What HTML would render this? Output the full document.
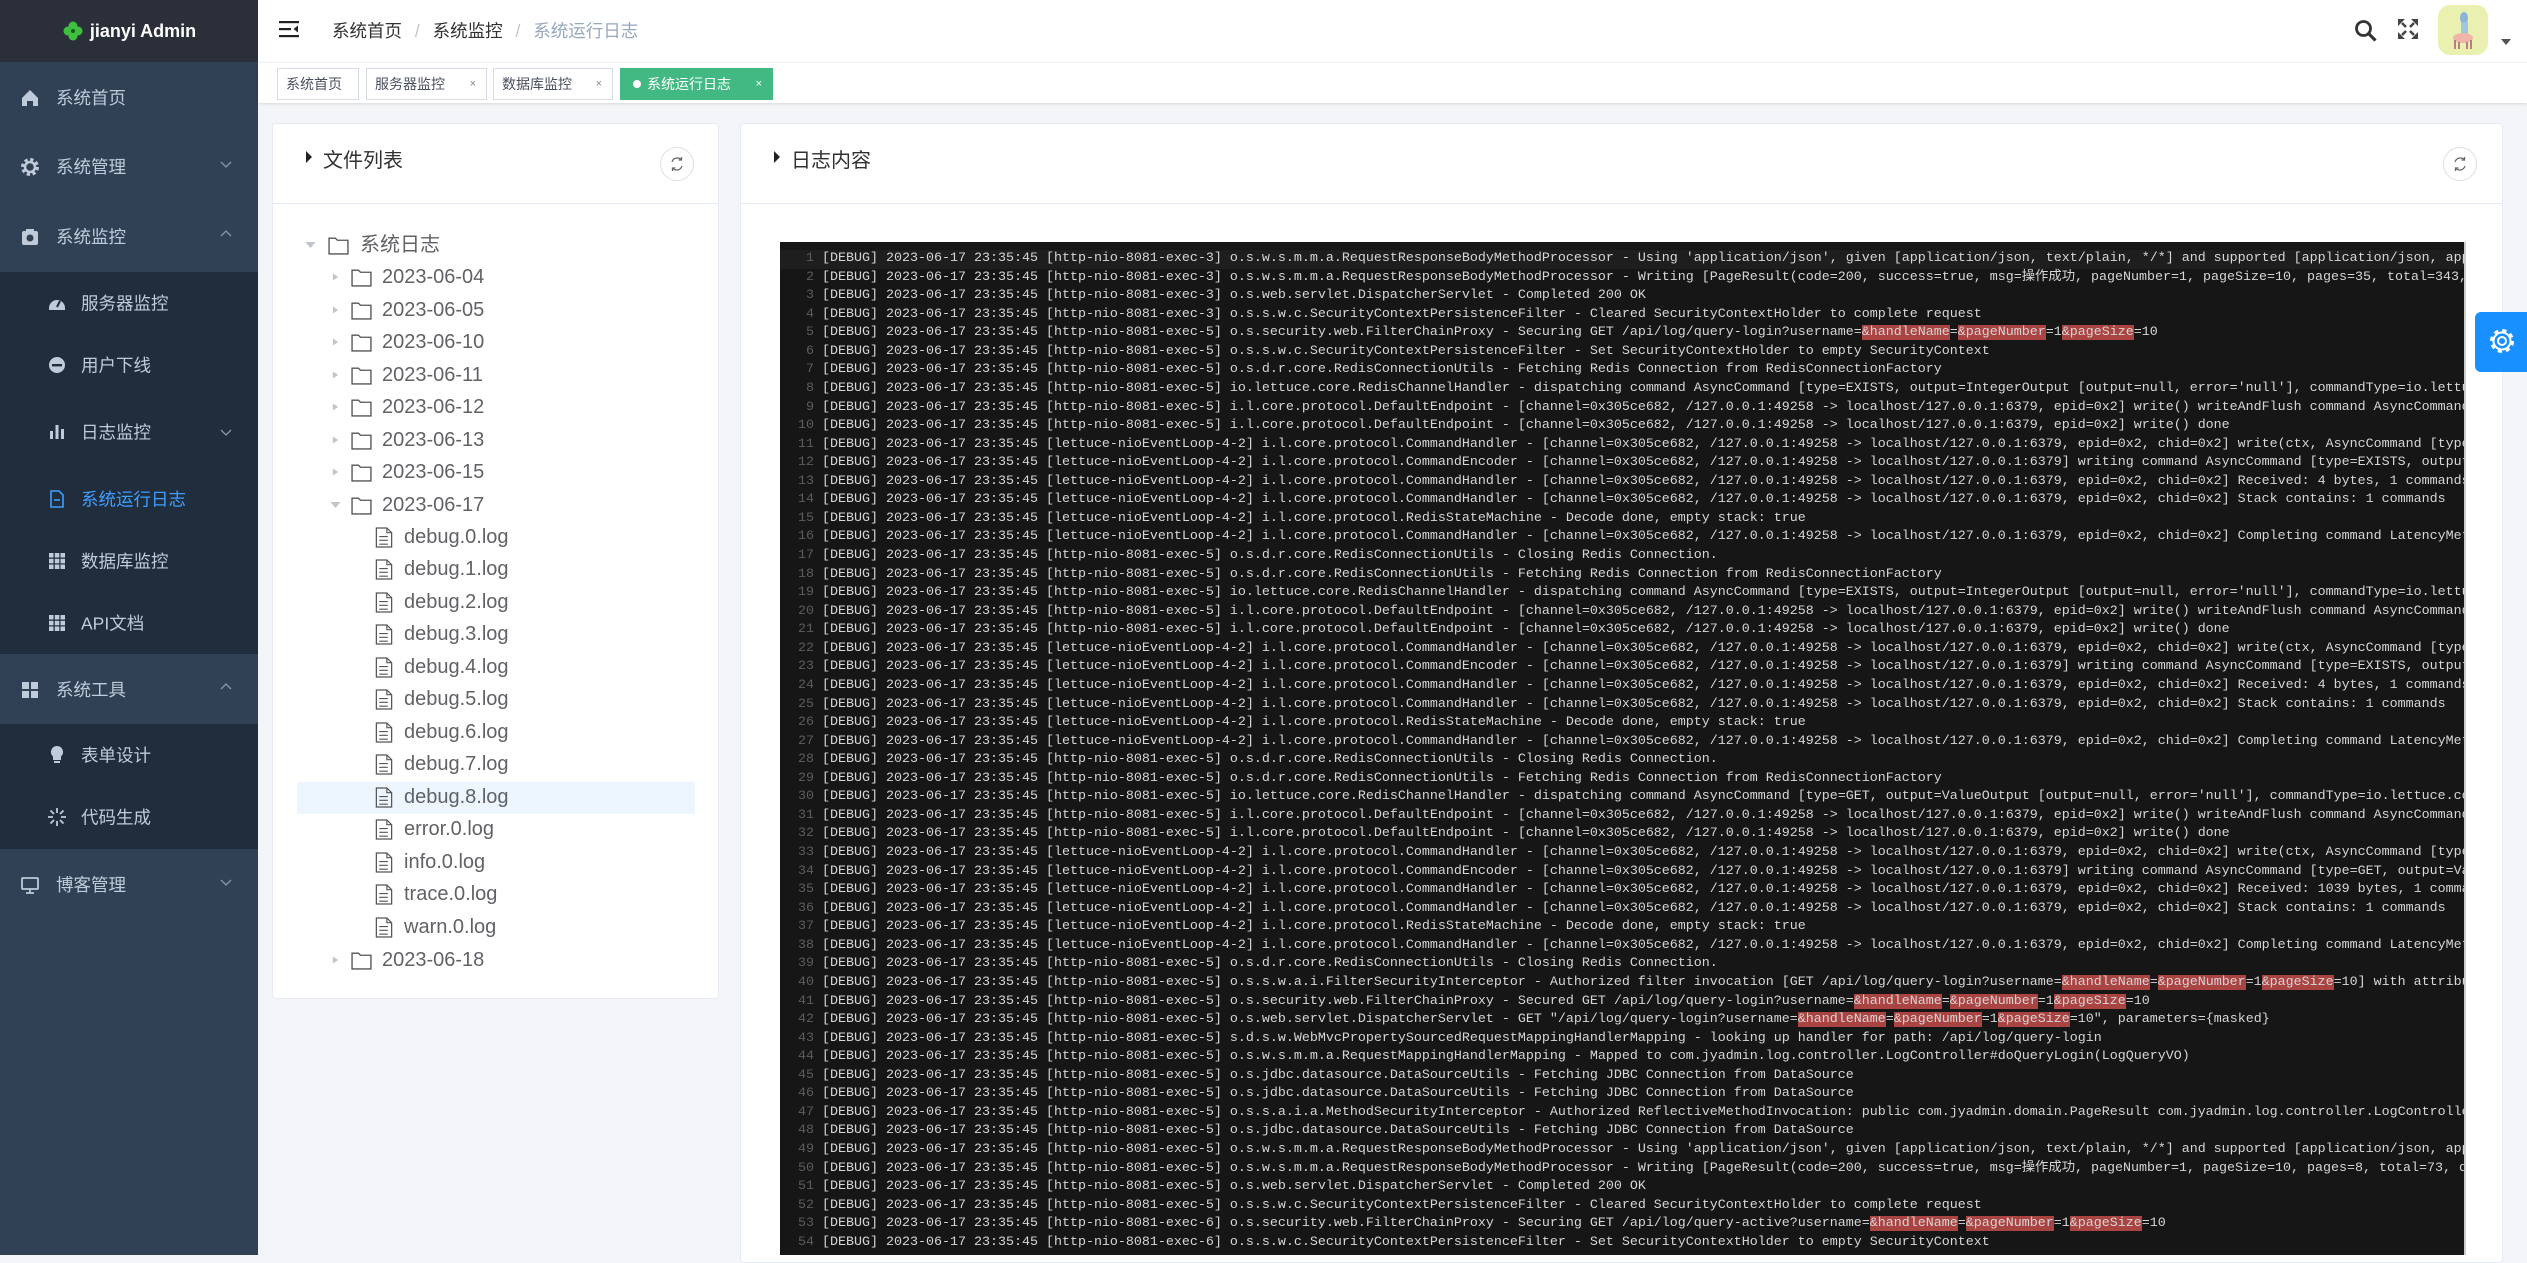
<!DOCTYPE html>
<html><head><meta charset="utf-8"><style>
*{margin:0;padding:0;box-sizing:border-box}
body{width:2527px;height:1255px;overflow:hidden;background:#f3f5f8;font-family:"Liberation Sans","Noto Sans CJK SC",sans-serif;position:relative}
.abs{position:absolute}
#side{left:0;top:0;width:258px;height:1255px;background:#304156}
#logo{left:0;top:0;width:258px;height:62px;background:#2b2f3a;color:#fff;font-weight:bold;font-size:18px;display:flex;align-items:center;justify-content:center;gap:6px}
.mi{position:absolute;left:0;width:258px;height:70px;display:flex;align-items:center;color:#bfcbd9;font-size:17.5px}
.mi .ic{position:absolute;left:20px;top:26px;width:20px;height:20px}
.mi .tx{position:absolute;left:56px}
.mi .ar{position:absolute;left:220px;top:27px;width:12px;height:12px}
.sub{position:absolute;left:0;width:258px;background:#1f2d3d}
.si{position:absolute;left:0;width:258px;height:62px;color:#bfcbd9;font-size:17.5px}
.si .ic{position:absolute;left:47px;top:21px;width:20px;height:20px}
.si .tx{position:absolute;left:81px;top:50%;transform:translateY(-50%)}
#hdr{left:258px;top:0;width:2269px;height:62px;background:#fff}
#tags{left:258px;top:62px;width:2269px;height:41px;background:#fff;border-top:1px solid #eef0f3;box-shadow:0 1px 3px rgba(0,0,0,.12)}
.tag{position:absolute;top:5px;height:32px;border:1px solid #d8dce5;background:#fff;color:#495060;font-size:14px;line-height:30px;padding-left:8px}
.tag .x{position:absolute;right:10px;font-size:11px;color:#888}
.card{background:#fff;border:1px solid #e6ebf5;border-radius:4px}
.ch{position:absolute;left:0;right:0;top:0;height:80px;border-bottom:1px solid #e6ebf5}
.rb{position:absolute;width:34px;height:34px;border:1px solid #dcdfe6;border-radius:50%;background:#fff}
.tr{position:absolute;font-size:20px;color:#606266;height:32px;line-height:32px;white-space:nowrap}
#log{left:780px;top:242px;width:1684px;height:1013px;background:#161616;overflow:hidden;font-family:"Liberation Mono","Noto Sans CJK SC",monospace;font-size:13.33px;color:#d6d6d6;padding-top:8px}
.ln{height:18.57px;line-height:18.57px;white-space:pre;position:relative;padding-left:42px}
.ln i{font-style:normal;position:absolute;left:0;width:34px;text-align:right;color:#5c5c5c}
.ln:first-child{background:#1e1e1e}
.r{background:#a94442;font-weight:normal}
</style></head><body>
<div id="side" class="abs"></div>
<div id="logo" class="abs"><svg width="22" height="22" viewBox="0 0 22 22"><g fill="#3fbf3f"><circle cx="11" cy="6" r="4.5"/><circle cx="6" cy="11" r="4.5"/><circle cx="16" cy="11" r="4.5"/><circle cx="11" cy="16" r="4.5"/></g><circle cx="11" cy="11" r="2" fill="#1a5a1a"/></svg><span>jianyi Admin</span></div>

<div class="mi" style="top:62px"><svg class="ic" viewBox="0 0 20 20"><path d="M10 2L2 10v8h5v-5h6v5h5v-8z" fill="#bfcbd9"/></svg><span class="tx">系统首页</span></div>
<div class="mi" style="top:131px"><svg class="ic" viewBox="0 0 20 20"><circle cx="10" cy="10" r="7" fill="none" stroke="#bfcbd9" stroke-width="4" stroke-dasharray="3 2.5"/><circle cx="10" cy="10" r="5" fill="none" stroke="#bfcbd9" stroke-width="2.5"/></svg><span class="tx">系统管理</span><svg class="ar" viewBox="0 0 12 12"><path d="M1 4l5 5 5-5" fill="none" stroke="#8a97a8" stroke-width="1.3"/></svg></div>
<div class="mi" style="top:201px"><svg class="ic" viewBox="0 0 20 20"><rect x="2" y="4" width="16" height="14" rx="2" fill="#bfcbd9"/><rect x="6" y="2" width="8" height="3" fill="#bfcbd9"/><circle cx="10" cy="11" r="3.5" fill="#304156"/></svg><span class="tx">系统监控</span><svg class="ar" viewBox="0 0 12 12"><path d="M1 8l5-5 5 5" fill="none" stroke="#8a97a8" stroke-width="1.3"/></svg></div>

<div class="sub" style="top:272px;height:382px">
 <div class="si" style="top:0"><svg class="ic" viewBox="0 0 20 20"><path d="M2 15a8 8 0 0116 0v2H2z" fill="#bfcbd9"/><path d="M10 14l3-6" stroke="#1f2d3d" stroke-width="2"/></svg><span class="tx">服务器监控</span></div>
 <div class="si" style="top:62px"><svg class="ic" viewBox="0 0 20 20"><circle cx="10" cy="10" r="8" fill="#bfcbd9"/><rect x="5" y="9" width="10" height="2.4" fill="#1f2d3d"/></svg><span class="tx">用户下线</span></div>
 <div class="si" style="top:129px"><svg class="ic" viewBox="0 0 20 20"><g fill="#bfcbd9"><rect x="3" y="9" width="3" height="8"/><rect x="8.5" y="3" width="3" height="14"/><rect x="14" y="7" width="3" height="10"/></g></svg><span class="tx">日志监控</span><svg class="ar" style="position:absolute;left:220px;top:25px;width:12px;height:12px" viewBox="0 0 12 12"><path d="M1 4l5 5 5-5" fill="none" stroke="#8a97a8" stroke-width="1.3"/></svg></div>
 <div class="si" style="top:196px;color:#409eff"><svg class="ic" viewBox="0 0 20 20"><path d="M4 2h8l4 4v12H4z" fill="none" stroke="#409eff" stroke-width="1.6"/><path d="M7 11h6" stroke="#409eff" stroke-width="1.6"/></svg><span class="tx">系统运行日志</span></div>
 <div class="si" style="top:258px"><svg class="ic" viewBox="0 0 20 20"><g fill="#bfcbd9"><rect x="2" y="2" width="4.5" height="4.5"/><rect x="7.8" y="2" width="4.5" height="4.5"/><rect x="13.5" y="2" width="4.5" height="4.5"/><rect x="2" y="7.8" width="4.5" height="4.5"/><rect x="7.8" y="7.8" width="4.5" height="4.5"/><rect x="13.5" y="7.8" width="4.5" height="4.5"/><rect x="2" y="13.5" width="4.5" height="4.5"/><rect x="7.8" y="13.5" width="4.5" height="4.5"/><rect x="13.5" y="13.5" width="4.5" height="4.5"/></g></svg><span class="tx">数据库监控</span></div>
 <div class="si" style="top:320px"><svg class="ic" viewBox="0 0 20 20"><g fill="#bfcbd9"><rect x="2" y="2" width="4.5" height="4.5"/><rect x="7.8" y="2" width="4.5" height="4.5"/><rect x="13.5" y="2" width="4.5" height="4.5"/><rect x="2" y="7.8" width="4.5" height="4.5"/><rect x="7.8" y="7.8" width="4.5" height="4.5"/><rect x="13.5" y="7.8" width="4.5" height="4.5"/><rect x="2" y="13.5" width="4.5" height="4.5"/><rect x="7.8" y="13.5" width="4.5" height="4.5"/><rect x="13.5" y="13.5" width="4.5" height="4.5"/></g></svg><span class="tx">API文档</span></div>
</div>
<div class="mi" style="top:654px"><svg class="ic" viewBox="0 0 20 20"><g fill="#bfcbd9"><rect x="2" y="2" width="7" height="7"/><rect x="11" y="2" width="7" height="7"/><rect x="2" y="11" width="7" height="7"/><rect x="11" y="11" width="7" height="7"/></g></svg><span class="tx">系统工具</span><svg class="ar" viewBox="0 0 12 12"><path d="M1 8l5-5 5 5" fill="none" stroke="#8a97a8" stroke-width="1.3"/></svg></div>
<div class="sub" style="top:724px;height:125px">
 <div class="si" style="top:0"><svg class="ic" viewBox="0 0 20 20"><path d="M10 1a6 6 0 00-4 10.5V15h8v-3.5A6 6 0 0010 1z" fill="#bfcbd9"/><rect x="7" y="16" width="6" height="2" fill="#bfcbd9"/></svg><span class="tx">表单设计</span></div>
 <div class="si" style="top:62px"><svg class="ic" viewBox="0 0 20 20"><g stroke="#bfcbd9" stroke-width="1.8"><path d="M10 1v5M10 14v5M1 10h5M14 10h5M3.5 3.5l3.5 3.5M13 13l3.5 3.5M16.5 3.5L13 7M7 13l-3.5 3.5"/></g></svg><span class="tx">代码生成</span></div>
</div>
<div class="mi" style="top:849px"><svg class="ic" viewBox="0 0 20 20"><rect x="2" y="3" width="16" height="11" rx="1" fill="none" stroke="#bfcbd9" stroke-width="1.8"/><path d="M10 14v3M6 18h8" stroke="#bfcbd9" stroke-width="1.8"/></svg><span class="tx">博客管理</span><svg class="ar" viewBox="0 0 12 12"><path d="M1 4l5 5 5-5" fill="none" stroke="#8a97a8" stroke-width="1.3"/></svg></div>

<div id="hdr" class="abs">
 <svg class="abs" style="left:21px;top:19px" width="20" height="20" viewBox="0 0 20 20"><g fill="#222"><rect x="0" y="2" width="20" height="2.2"/><rect x="0" y="9" width="12" height="2.2"/><rect x="0" y="16" width="20" height="2.2"/><path d="M19 6.5v7l-4.5-3.5z"/></g></svg>
 <div class="abs" style="left:74px;top:18px;font-size:17.5px;color:#303133;white-space:nowrap">系统首页 <span style="color:#c0c4cc;margin:0 8px">/</span> 系统监控 <span style="color:#c0c4cc;margin:0 8px">/</span> <span style="color:#97a8be">系统运行日志</span></div>
 <svg class="abs" style="left:2096px;top:19px" width="24" height="24" viewBox="0 0 24 24"><circle cx="9.5" cy="9.5" r="7" fill="none" stroke="#333" stroke-width="2.8"/><path d="M14.5 14.5l7 7" stroke="#333" stroke-width="3.2"/></svg>
 <svg class="abs" style="left:2139px;top:18px" width="22" height="22" viewBox="0 0 22 22"><g fill="#444"><path d="M1 1h7L1 8zM21 1h-7l7 7zM1 21h7l-7-7zM21 21h-7l7-7z"/><path d="M5 5l4 4M17 5l-4 4M5 17l4-4M17 17l-4-4" stroke="#444" stroke-width="2.5"/></g></svg>
 <div class="abs" style="left:2180px;top:5px;width:50px;height:50px;border-radius:12px;background:#eaf1b0;overflow:hidden"><svg width="50" height="50" viewBox="0 0 50 50"><ellipse cx="26" cy="13" rx="4" ry="6" fill="#8ab4d8"/><rect x="23" y="17" width="7" height="12" fill="#9fc5df"/><ellipse cx="25" cy="33" rx="10" ry="5" fill="#f0b5a8"/><path d="M17 35v9M33 35v9M21 37v7M29 37v7" stroke="#a57" stroke-width="1.5"/></svg></div>
 <svg class="abs" style="left:2243px;top:39px" width="10" height="7" viewBox="0 0 10 7"><path d="M0 0h10L5 6z" fill="#555"/></svg>
</div>
<div id="tags" class="abs">
 <div class="tag" style="left:19px;width:82px">系统首页</div>
 <div class="tag" style="left:108px;width:121px">服务器监控<span class="x">×</span></div>
 <div class="tag" style="left:235px;width:120px">数据库监控<span class="x">×</span></div>
 <div class="tag" style="left:362px;width:153px;background:#42b983;border-color:#42b983;color:#fff;padding-left:12px"><span style="display:inline-block;width:8px;height:8px;border-radius:50%;background:#fff;margin-right:6px;vertical-align:1px"></span>系统运行日志<span class="x" style="color:#fff">×</span></div>
</div>

<div class="card abs" style="left:272px;top:123px;width:447px;height:876px">
 <div class="ch"><svg class="abs" style="left:32px;top:26px" width="8" height="14" viewBox="0 0 8 14"><path d="M1 1l6 6-6 6z" fill="#222"/></svg><span class="abs" style="left:50px;top:20px;font-size:20px;color:#303133">文件列表</span><div class="rb" style="left:387px;top:23px"><svg width="32" height="32" viewBox="0 0 32 32"><path d="M11 14a5.5 5.5 0 019.5-2M21 18a5.5 5.5 0 01-9.5 2" fill="none" stroke="#666" stroke-width="1.3"/><path d="M20.5 9v3h-3M11.5 23v-3h3" fill="none" stroke="#666" stroke-width="1.3"/></svg></div></div>
</div>
<div class="card abs" style="left:740px;top:123px;width:1763px;height:1140px">
 <div class="ch"><svg class="abs" style="left:32px;top:26px" width="8" height="14" viewBox="0 0 8 14"><path d="M1 1l6 6-6 6z" fill="#222"/></svg><span class="abs" style="left:50px;top:20px;font-size:20px;color:#303133">日志内容</span><div class="rb" style="left:1702px;top:23px"><svg width="32" height="32" viewBox="0 0 32 32"><path d="M11 14a5.5 5.5 0 019.5-2M21 18a5.5 5.5 0 01-9.5 2" fill="none" stroke="#666" stroke-width="1.3"/><path d="M20.5 9v3h-3M11.5 23v-3h3" fill="none" stroke="#666" stroke-width="1.3"/></svg></div></div>
</div>

<!-- tree -->
<div class="abs" style="left:297px;top:782px;width:398px;height:32px;background:#edf5fe"></div>
<svg width="0" height="0" style="position:absolute"><defs>
<symbol id="fo" viewBox="0 0 20 18"><path d="M1 2h6l2 2h10v13H1z" fill="none" stroke="#555" stroke-width="1.3"/></symbol>
<symbol id="fi" viewBox="0 0 18 22"><path d="M1 1h11l5 5v15H1z" fill="none" stroke="#555" stroke-width="1.3"/><path d="M12 1v5h5M4 10h9M4 14h9M4 18h9" fill="none" stroke="#555" stroke-width="1.2"/></symbol>
<symbol id="cr" viewBox="0 0 8 10"><path d="M1 1l6 4-6 4z" fill="#c0c4cc"/></symbol>
<symbol id="cd" viewBox="0 0 10 8"><path d="M0 1h10L5 7z" fill="#c0c4cc"/></symbol>
</defs></svg>
<svg class="abs" style="left:305px;top:241px" width="11" height="8"><use href="#cd"/></svg>
<svg class="abs" style="left:328px;top:236px" width="21" height="19"><use href="#fo"/></svg>
<div class="tr" style="left:360px;top:229px">系统日志</div>
<!-- dates -->
<svg class="abs" style="left:332px;top:272px" width="7" height="10"><use href="#cr"/></svg><svg class="abs" style="left:351px;top:268px" width="21" height="19"><use href="#fo"/></svg><div class="tr" style="left:382px;top:261px">2023-06-04</div>
<svg class="abs" style="left:332px;top:305px" width="7" height="10"><use href="#cr"/></svg><svg class="abs" style="left:351px;top:301px" width="21" height="19"><use href="#fo"/></svg><div class="tr" style="left:382px;top:294px">2023-06-05</div>
<svg class="abs" style="left:332px;top:337px" width="7" height="10"><use href="#cr"/></svg><svg class="abs" style="left:351px;top:333px" width="21" height="19"><use href="#fo"/></svg><div class="tr" style="left:382px;top:326px">2023-06-10</div>
<svg class="abs" style="left:332px;top:370px" width="7" height="10"><use href="#cr"/></svg><svg class="abs" style="left:351px;top:366px" width="21" height="19"><use href="#fo"/></svg><div class="tr" style="left:382px;top:359px">2023-06-11</div>
<svg class="abs" style="left:332px;top:402px" width="7" height="10"><use href="#cr"/></svg><svg class="abs" style="left:351px;top:398px" width="21" height="19"><use href="#fo"/></svg><div class="tr" style="left:382px;top:391px">2023-06-12</div>
<svg class="abs" style="left:332px;top:435px" width="7" height="10"><use href="#cr"/></svg><svg class="abs" style="left:351px;top:431px" width="21" height="19"><use href="#fo"/></svg><div class="tr" style="left:382px;top:424px">2023-06-13</div>
<svg class="abs" style="left:332px;top:467px" width="7" height="10"><use href="#cr"/></svg><svg class="abs" style="left:351px;top:463px" width="21" height="19"><use href="#fo"/></svg><div class="tr" style="left:382px;top:456px">2023-06-15</div>
<svg class="abs" style="left:330px;top:501px" width="11" height="8"><use href="#cd"/></svg><svg class="abs" style="left:351px;top:496px" width="21" height="19"><use href="#fo"/></svg><div class="tr" style="left:382px;top:489px">2023-06-17</div>
<!-- files -->
<svg class="abs" style="left:375px;top:527px" width="18" height="21"><use href="#fi"/></svg><div class="tr" style="left:404px;top:521px">debug.0.log</div>
<svg class="abs" style="left:375px;top:559px" width="18" height="21"><use href="#fi"/></svg><div class="tr" style="left:404px;top:553px">debug.1.log</div>
<svg class="abs" style="left:375px;top:592px" width="18" height="21"><use href="#fi"/></svg><div class="tr" style="left:404px;top:586px">debug.2.log</div>
<svg class="abs" style="left:375px;top:624px" width="18" height="21"><use href="#fi"/></svg><div class="tr" style="left:404px;top:618px">debug.3.log</div>
<svg class="abs" style="left:375px;top:657px" width="18" height="21"><use href="#fi"/></svg><div class="tr" style="left:404px;top:651px">debug.4.log</div>
<svg class="abs" style="left:375px;top:689px" width="18" height="21"><use href="#fi"/></svg><div class="tr" style="left:404px;top:683px">debug.5.log</div>
<svg class="abs" style="left:375px;top:722px" width="18" height="21"><use href="#fi"/></svg><div class="tr" style="left:404px;top:716px">debug.6.log</div>
<svg class="abs" style="left:375px;top:754px" width="18" height="21"><use href="#fi"/></svg><div class="tr" style="left:404px;top:748px">debug.7.log</div>
<svg class="abs" style="left:375px;top:787px" width="18" height="21"><use href="#fi"/></svg><div class="tr" style="left:404px;top:781px">debug.8.log</div>
<svg class="abs" style="left:375px;top:819px" width="18" height="21"><use href="#fi"/></svg><div class="tr" style="left:404px;top:813px">error.0.log</div>
<svg class="abs" style="left:375px;top:852px" width="18" height="21"><use href="#fi"/></svg><div class="tr" style="left:404px;top:846px">info.0.log</div>
<svg class="abs" style="left:375px;top:884px" width="18" height="21"><use href="#fi"/></svg><div class="tr" style="left:404px;top:878px">trace.0.log</div>
<svg class="abs" style="left:375px;top:917px" width="18" height="21"><use href="#fi"/></svg><div class="tr" style="left:404px;top:911px">warn.0.log</div>
<svg class="abs" style="left:332px;top:955px" width="7" height="10"><use href="#cr"/></svg><svg class="abs" style="left:351px;top:951px" width="21" height="19"><use href="#fo"/></svg><div class="tr" style="left:382px;top:944px">2023-06-18</div>

<div id="log" class="abs">
<div class="ln"><i>1</i>[DEBUG] 2023-06-17 23:35:45 [http-nio-8081-exec-3] o.s.w.s.m.m.a.RequestResponseBodyMethodProcessor - Using 'application/json', given [application/json, text/plain, */*] and supported [application/json, application/*+json]</div>
<div class="ln"><i>2</i>[DEBUG] 2023-06-17 23:35:45 [http-nio-8081-exec-3] o.s.w.s.m.m.a.RequestResponseBodyMethodProcessor - Writing [PageResult(code=200, success=true, msg=操作成功, pageNumber=1, pageSize=10, pages=35, total=343, data=[</div>
<div class="ln"><i>3</i>[DEBUG] 2023-06-17 23:35:45 [http-nio-8081-exec-3] o.s.web.servlet.DispatcherServlet - Completed 200 OK</div>
<div class="ln"><i>4</i>[DEBUG] 2023-06-17 23:35:45 [http-nio-8081-exec-3] o.s.s.w.c.SecurityContextPersistenceFilter - Cleared SecurityContextHolder to complete request</div>
<div class="ln"><i>5</i>[DEBUG] 2023-06-17 23:35:45 [http-nio-8081-exec-5] o.s.security.web.FilterChainProxy - Securing GET /api/log/query-login?username=<span class="r">&amp;handleName</span>=<span class="r">&amp;pageNumber</span>=1<span class="r">&amp;pageSize</span>=10</div>
<div class="ln"><i>6</i>[DEBUG] 2023-06-17 23:35:45 [http-nio-8081-exec-5] o.s.s.w.c.SecurityContextPersistenceFilter - Set SecurityContextHolder to empty SecurityContext</div>
<div class="ln"><i>7</i>[DEBUG] 2023-06-17 23:35:45 [http-nio-8081-exec-5] o.s.d.r.core.RedisConnectionUtils - Fetching Redis Connection from RedisConnectionFactory</div>
<div class="ln"><i>8</i>[DEBUG] 2023-06-17 23:35:45 [http-nio-8081-exec-5] io.lettuce.core.RedisChannelHandler - dispatching command AsyncCommand [type=EXISTS, output=IntegerOutput [output=null, error='null'], commandType=io.lettuce.core.protocol.Command]</div>
<div class="ln"><i>9</i>[DEBUG] 2023-06-17 23:35:45 [http-nio-8081-exec-5] i.l.core.protocol.DefaultEndpoint - [channel=0x305ce682, /127.0.0.1:49258 -> localhost/127.0.0.1:6379, epid=0x2] write() writeAndFlush command AsyncCommand [type=EXISTS</div>
<div class="ln"><i>10</i>[DEBUG] 2023-06-17 23:35:45 [http-nio-8081-exec-5] i.l.core.protocol.DefaultEndpoint - [channel=0x305ce682, /127.0.0.1:49258 -> localhost/127.0.0.1:6379, epid=0x2] write() done</div>
<div class="ln"><i>11</i>[DEBUG] 2023-06-17 23:35:45 [lettuce-nioEventLoop-4-2] i.l.core.protocol.CommandHandler - [channel=0x305ce682, /127.0.0.1:49258 -> localhost/127.0.0.1:6379, epid=0x2, chid=0x2] write(ctx, AsyncCommand [type=EXISTS</div>
<div class="ln"><i>12</i>[DEBUG] 2023-06-17 23:35:45 [lettuce-nioEventLoop-4-2] i.l.core.protocol.CommandEncoder - [channel=0x305ce682, /127.0.0.1:49258 -> localhost/127.0.0.1:6379] writing command AsyncCommand [type=EXISTS, output=IntegerOutput</div>
<div class="ln"><i>13</i>[DEBUG] 2023-06-17 23:35:45 [lettuce-nioEventLoop-4-2] i.l.core.protocol.CommandHandler - [channel=0x305ce682, /127.0.0.1:49258 -> localhost/127.0.0.1:6379, epid=0x2, chid=0x2] Received: 4 bytes, 1 commands in the stack</div>
<div class="ln"><i>14</i>[DEBUG] 2023-06-17 23:35:45 [lettuce-nioEventLoop-4-2] i.l.core.protocol.CommandHandler - [channel=0x305ce682, /127.0.0.1:49258 -> localhost/127.0.0.1:6379, epid=0x2, chid=0x2] Stack contains: 1 commands</div>
<div class="ln"><i>15</i>[DEBUG] 2023-06-17 23:35:45 [lettuce-nioEventLoop-4-2] i.l.core.protocol.RedisStateMachine - Decode done, empty stack: true</div>
<div class="ln"><i>16</i>[DEBUG] 2023-06-17 23:35:45 [lettuce-nioEventLoop-4-2] i.l.core.protocol.CommandHandler - [channel=0x305ce682, /127.0.0.1:49258 -> localhost/127.0.0.1:6379, epid=0x2, chid=0x2] Completing command LatencyMeteredCommand</div>
<div class="ln"><i>17</i>[DEBUG] 2023-06-17 23:35:45 [http-nio-8081-exec-5] o.s.d.r.core.RedisConnectionUtils - Closing Redis Connection.</div>
<div class="ln"><i>18</i>[DEBUG] 2023-06-17 23:35:45 [http-nio-8081-exec-5] o.s.d.r.core.RedisConnectionUtils - Fetching Redis Connection from RedisConnectionFactory</div>
<div class="ln"><i>19</i>[DEBUG] 2023-06-17 23:35:45 [http-nio-8081-exec-5] io.lettuce.core.RedisChannelHandler - dispatching command AsyncCommand [type=EXISTS, output=IntegerOutput [output=null, error='null'], commandType=io.lettuce.core.protocol.Command]</div>
<div class="ln"><i>20</i>[DEBUG] 2023-06-17 23:35:45 [http-nio-8081-exec-5] i.l.core.protocol.DefaultEndpoint - [channel=0x305ce682, /127.0.0.1:49258 -> localhost/127.0.0.1:6379, epid=0x2] write() writeAndFlush command AsyncCommand [type=EXISTS</div>
<div class="ln"><i>21</i>[DEBUG] 2023-06-17 23:35:45 [http-nio-8081-exec-5] i.l.core.protocol.DefaultEndpoint - [channel=0x305ce682, /127.0.0.1:49258 -> localhost/127.0.0.1:6379, epid=0x2] write() done</div>
<div class="ln"><i>22</i>[DEBUG] 2023-06-17 23:35:45 [lettuce-nioEventLoop-4-2] i.l.core.protocol.CommandHandler - [channel=0x305ce682, /127.0.0.1:49258 -> localhost/127.0.0.1:6379, epid=0x2, chid=0x2] write(ctx, AsyncCommand [type=EXISTS</div>
<div class="ln"><i>23</i>[DEBUG] 2023-06-17 23:35:45 [lettuce-nioEventLoop-4-2] i.l.core.protocol.CommandEncoder - [channel=0x305ce682, /127.0.0.1:49258 -> localhost/127.0.0.1:6379] writing command AsyncCommand [type=EXISTS, output=IntegerOutput</div>
<div class="ln"><i>24</i>[DEBUG] 2023-06-17 23:35:45 [lettuce-nioEventLoop-4-2] i.l.core.protocol.CommandHandler - [channel=0x305ce682, /127.0.0.1:49258 -> localhost/127.0.0.1:6379, epid=0x2, chid=0x2] Received: 4 bytes, 1 commands in the stack</div>
<div class="ln"><i>25</i>[DEBUG] 2023-06-17 23:35:45 [lettuce-nioEventLoop-4-2] i.l.core.protocol.CommandHandler - [channel=0x305ce682, /127.0.0.1:49258 -> localhost/127.0.0.1:6379, epid=0x2, chid=0x2] Stack contains: 1 commands</div>
<div class="ln"><i>26</i>[DEBUG] 2023-06-17 23:35:45 [lettuce-nioEventLoop-4-2] i.l.core.protocol.RedisStateMachine - Decode done, empty stack: true</div>
<div class="ln"><i>27</i>[DEBUG] 2023-06-17 23:35:45 [lettuce-nioEventLoop-4-2] i.l.core.protocol.CommandHandler - [channel=0x305ce682, /127.0.0.1:49258 -> localhost/127.0.0.1:6379, epid=0x2, chid=0x2] Completing command LatencyMeteredCommand</div>
<div class="ln"><i>28</i>[DEBUG] 2023-06-17 23:35:45 [http-nio-8081-exec-5] o.s.d.r.core.RedisConnectionUtils - Closing Redis Connection.</div>
<div class="ln"><i>29</i>[DEBUG] 2023-06-17 23:35:45 [http-nio-8081-exec-5] o.s.d.r.core.RedisConnectionUtils - Fetching Redis Connection from RedisConnectionFactory</div>
<div class="ln"><i>30</i>[DEBUG] 2023-06-17 23:35:45 [http-nio-8081-exec-5] io.lettuce.core.RedisChannelHandler - dispatching command AsyncCommand [type=GET, output=ValueOutput [output=null, error='null'], commandType=io.lettuce.core.protocol.Command]</div>
<div class="ln"><i>31</i>[DEBUG] 2023-06-17 23:35:45 [http-nio-8081-exec-5] i.l.core.protocol.DefaultEndpoint - [channel=0x305ce682, /127.0.0.1:49258 -> localhost/127.0.0.1:6379, epid=0x2] write() writeAndFlush command AsyncCommand [type=GET</div>
<div class="ln"><i>32</i>[DEBUG] 2023-06-17 23:35:45 [http-nio-8081-exec-5] i.l.core.protocol.DefaultEndpoint - [channel=0x305ce682, /127.0.0.1:49258 -> localhost/127.0.0.1:6379, epid=0x2] write() done</div>
<div class="ln"><i>33</i>[DEBUG] 2023-06-17 23:35:45 [lettuce-nioEventLoop-4-2] i.l.core.protocol.CommandHandler - [channel=0x305ce682, /127.0.0.1:49258 -> localhost/127.0.0.1:6379, epid=0x2, chid=0x2] write(ctx, AsyncCommand [type=GET</div>
<div class="ln"><i>34</i>[DEBUG] 2023-06-17 23:35:45 [lettuce-nioEventLoop-4-2] i.l.core.protocol.CommandEncoder - [channel=0x305ce682, /127.0.0.1:49258 -> localhost/127.0.0.1:6379] writing command AsyncCommand [type=GET, output=ValueOutput</div>
<div class="ln"><i>35</i>[DEBUG] 2023-06-17 23:35:45 [lettuce-nioEventLoop-4-2] i.l.core.protocol.CommandHandler - [channel=0x305ce682, /127.0.0.1:49258 -> localhost/127.0.0.1:6379, epid=0x2, chid=0x2] Received: 1039 bytes, 1 commands in the stack</div>
<div class="ln"><i>36</i>[DEBUG] 2023-06-17 23:35:45 [lettuce-nioEventLoop-4-2] i.l.core.protocol.CommandHandler - [channel=0x305ce682, /127.0.0.1:49258 -> localhost/127.0.0.1:6379, epid=0x2, chid=0x2] Stack contains: 1 commands</div>
<div class="ln"><i>37</i>[DEBUG] 2023-06-17 23:35:45 [lettuce-nioEventLoop-4-2] i.l.core.protocol.RedisStateMachine - Decode done, empty stack: true</div>
<div class="ln"><i>38</i>[DEBUG] 2023-06-17 23:35:45 [lettuce-nioEventLoop-4-2] i.l.core.protocol.CommandHandler - [channel=0x305ce682, /127.0.0.1:49258 -> localhost/127.0.0.1:6379, epid=0x2, chid=0x2] Completing command LatencyMeteredCommand</div>
<div class="ln"><i>39</i>[DEBUG] 2023-06-17 23:35:45 [http-nio-8081-exec-5] o.s.d.r.core.RedisConnectionUtils - Closing Redis Connection.</div>
<div class="ln"><i>40</i>[DEBUG] 2023-06-17 23:35:45 [http-nio-8081-exec-5] o.s.s.w.a.i.FilterSecurityInterceptor - Authorized filter invocation [GET /api/log/query-login?username=<span class="r">&amp;handleName</span>=<span class="r">&amp;pageNumber</span>=1<span class="r">&amp;pageSize</span>=10] with attributes [authenticated]</div>
<div class="ln"><i>41</i>[DEBUG] 2023-06-17 23:35:45 [http-nio-8081-exec-5] o.s.security.web.FilterChainProxy - Secured GET /api/log/query-login?username=<span class="r">&amp;handleName</span>=<span class="r">&amp;pageNumber</span>=1<span class="r">&amp;pageSize</span>=10</div>
<div class="ln"><i>42</i>[DEBUG] 2023-06-17 23:35:45 [http-nio-8081-exec-5] o.s.web.servlet.DispatcherServlet - GET "/api/log/query-login?username=<span class="r">&amp;handleName</span>=<span class="r">&amp;pageNumber</span>=1<span class="r">&amp;pageSize</span>=10", parameters={masked}</div>
<div class="ln"><i>43</i>[DEBUG] 2023-06-17 23:35:45 [http-nio-8081-exec-5] s.d.s.w.WebMvcPropertySourcedRequestMappingHandlerMapping - looking up handler for path: /api/log/query-login</div>
<div class="ln"><i>44</i>[DEBUG] 2023-06-17 23:35:45 [http-nio-8081-exec-5] o.s.w.s.m.m.a.RequestMappingHandlerMapping - Mapped to com.jyadmin.log.controller.LogController#doQueryLogin(LogQueryVO)</div>
<div class="ln"><i>45</i>[DEBUG] 2023-06-17 23:35:45 [http-nio-8081-exec-5] o.s.jdbc.datasource.DataSourceUtils - Fetching JDBC Connection from DataSource</div>
<div class="ln"><i>46</i>[DEBUG] 2023-06-17 23:35:45 [http-nio-8081-exec-5] o.s.jdbc.datasource.DataSourceUtils - Fetching JDBC Connection from DataSource</div>
<div class="ln"><i>47</i>[DEBUG] 2023-06-17 23:35:45 [http-nio-8081-exec-5] o.s.s.a.i.a.MethodSecurityInterceptor - Authorized ReflectiveMethodInvocation: public com.jyadmin.domain.PageResult com.jyadmin.log.controller.LogController.doQueryLogin</div>
<div class="ln"><i>48</i>[DEBUG] 2023-06-17 23:35:45 [http-nio-8081-exec-5] o.s.jdbc.datasource.DataSourceUtils - Fetching JDBC Connection from DataSource</div>
<div class="ln"><i>49</i>[DEBUG] 2023-06-17 23:35:45 [http-nio-8081-exec-5] o.s.w.s.m.m.a.RequestResponseBodyMethodProcessor - Using 'application/json', given [application/json, text/plain, */*] and supported [application/json, application/*+json]</div>
<div class="ln"><i>50</i>[DEBUG] 2023-06-17 23:35:45 [http-nio-8081-exec-5] o.s.w.s.m.m.a.RequestResponseBodyMethodProcessor - Writing [PageResult(code=200, success=true, msg=操作成功, pageNumber=1, pageSize=10, pages=8, total=73, data=[</div>
<div class="ln"><i>51</i>[DEBUG] 2023-06-17 23:35:45 [http-nio-8081-exec-5] o.s.web.servlet.DispatcherServlet - Completed 200 OK</div>
<div class="ln"><i>52</i>[DEBUG] 2023-06-17 23:35:45 [http-nio-8081-exec-5] o.s.s.w.c.SecurityContextPersistenceFilter - Cleared SecurityContextHolder to complete request</div>
<div class="ln"><i>53</i>[DEBUG] 2023-06-17 23:35:45 [http-nio-8081-exec-6] o.s.security.web.FilterChainProxy - Securing GET /api/log/query-active?username=<span class="r">&amp;handleName</span>=<span class="r">&amp;pageNumber</span>=1<span class="r">&amp;pageSize</span>=10</div>
<div class="ln"><i>54</i>[DEBUG] 2023-06-17 23:35:45 [http-nio-8081-exec-6] o.s.s.w.c.SecurityContextPersistenceFilter - Set SecurityContextHolder to empty SecurityContext</div>
</div>
<div class="abs" style="left:2464px;top:242px;width:2px;height:1013px;background:#ccc"></div>

<div class="abs" style="left:2475px;top:312px;width:52px;height:60px;background:#1890ff;border-radius:6px 0 0 6px"><svg class="abs" style="left:12px;top:14px" width="30" height="30" viewBox="0 0 30 30"><circle cx="15" cy="15" r="10" fill="none" stroke="#fff" stroke-width="4" stroke-dasharray="4 3.85"/><circle cx="15" cy="15" r="8.5" fill="none" stroke="#fff" stroke-width="2"/><circle cx="15" cy="15" r="4" fill="none" stroke="#fff" stroke-width="2"/></svg></div>
</body></html>
